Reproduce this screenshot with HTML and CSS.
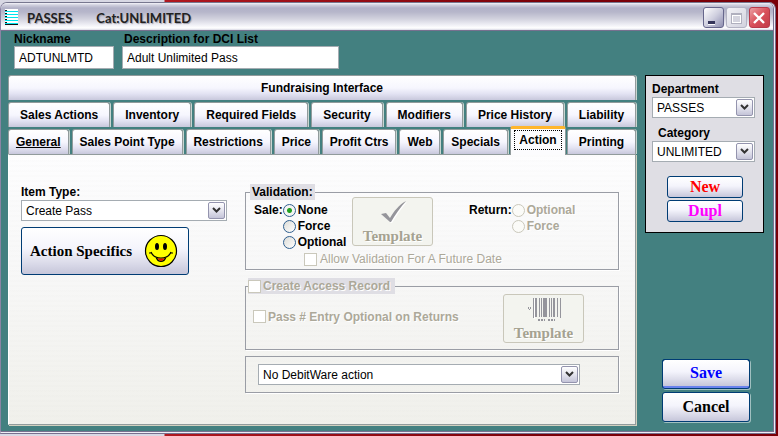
FILE: index.html
```html
<!DOCTYPE html>
<html lang="en">
<head>
    <meta charset="UTF-8">
    <meta name="viewport" content="width=device-width, initial-scale=1.0">
    <title>PASSES Cat:UNLIMITED</title>
    <link rel="stylesheet" href="styles.css">
</head>
<body>
    <div class="window">
        <header class="titlebar">
            <svg class="app-icon" width="14" height="17" viewBox="0 0 14 17" shape-rendering="crispEdges">
                <rect width="13" height="16" fill="#fff"/>
                <path d="M0 2.5h13M0 5.5h13M0 8.5h13M0 11.5h13M0 14.5h13" stroke="#00e5ee"/>
                <path d="M0 1.5h2M0 4.5h2M0 7.5h2M0 10.5h2M0 13.5h2M0 15.5h13" stroke="#111"/>
            </svg>
            <h1 class="title"><span>PASSES</span><span>Cat:UNLIMITED</span></h1>
            <div class="window-buttons">
                <button class="win-btn" type="button" aria-label="Minimize">
                    <svg width="18" height="18" viewBox="0 0 18 18"><path d="M4 13h7v3H4z" fill="#fff"/><path d="M4 12h7v3H4z" fill="#35355a"/></svg>
                </button>
                <button class="win-btn win-max" type="button" aria-label="Maximize" disabled>
                    <svg width="18" height="18" viewBox="0 0 18 18" shape-rendering="crispEdges"><path d="M4 4h11v11H4z" fill="#b0b0be"/><path d="M5 6h9v8H5z" fill="#fff"/><path d="M6 7h7v6H6z" fill="#d4d4de"/></svg>
                </button>
                <button class="win-btn win-close" type="button" aria-label="Close">
                    <svg width="18" height="18" viewBox="0 0 18 18"><path d="M4 4l10 10M14 4L4 14" stroke="#fff" stroke-width="2.4"/></svg>
                </button>
            </div>
        </header>

        <div class="client">
            <div class="fields">
                <div class="field field-nick">
                    <label for="nickname">Nickname</label>
                    <input type="text" id="nickname" value="ADTUNLMTD">
                </div>
                <div class="field field-desc">
                    <label for="description">Description for DCI List</label>
                    <input type="text" id="description" value="Adult Unlimited Pass">
                </div>
            </div>

            <div class="columns">
                <main class="notebook">
                    <div class="tabs" role="tablist">
                        <div class="tab-row">
                            <button class="tab" role="tab" type="button">Fundraising Interface</button>
                        </div>
                        <div class="tab-row">
                            <button class="tab" role="tab" type="button">Sales Actions</button>
                            <button class="tab" role="tab" type="button">Inventory</button>
                            <button class="tab" role="tab" type="button">Required Fields</button>
                            <button class="tab" role="tab" type="button">Security</button>
                            <button class="tab" role="tab" type="button">Modifiers</button>
                            <button class="tab" role="tab" type="button">Price History</button>
                            <button class="tab tab-last" role="tab" type="button">Liability</button>
                        </div>
                        <div class="tab-row">
                            <button class="tab" role="tab" type="button"><u>General</u></button>
                            <button class="tab" role="tab" type="button">Sales Point Type</button>
                            <button class="tab" role="tab" type="button">Restrictions</button>
                            <button class="tab" role="tab" type="button">Price</button>
                            <button class="tab" role="tab" type="button">Profit Ctrs</button>
                            <button class="tab" role="tab" type="button">Web</button>
                            <button class="tab" role="tab" type="button">Specials</button>
                            <button class="tab tab-active" role="tab" type="button" aria-selected="true"><span>Action</span></button>
                            <button class="tab tab-last" role="tab" type="button">Printing</button>
                        </div>
                    </div>

                    <section class="panel" role="tabpanel">
                        <div class="item-type">
                            <label for="itemType">Item Type:</label>
                            <div class="combo">
                                <select id="itemType"><option>Create Pass</option></select>
                                <svg class="combo-arrow" viewBox="0 0 15 15"><path d="M4 5l3.500 3.500L11 5" /></svg>
                            </div>
                            <button class="btn btn-specifics" type="button">
                                Action Specifics
                                <svg width="34" height="34" viewBox="0 0 34 34">
                                    <circle cx="17" cy="17" r="15.5" fill="#ff0" stroke="#000" stroke-width="1.2"/>
                                    <ellipse cx="13" cy="12.500" rx="2" ry="3.500"/>
                                    <ellipse cx="21" cy="12.500" rx="2" ry="3.500"/>
                                    <path d="M13 24q4 1 8 0q-4 6-8 0z" fill="#f00000"/>
                                    <path d="M5 19h3M26 19h3M7 18c3 8 17 8 20 0M12 23c2 6 8 6 10 0" fill="none" stroke="#000" stroke-width="1.2"/>
                                </svg>
                            </button>
                        </div>

                        <div class="groups">
                            <fieldset class="group group-validation">
                                <legend>Validation:</legend>
                                <div class="validation">
                                    <div class="choice">
                                        <span>Sale:</span>
                                        <div class="radios">
                                            <label><input type="radio" name="sale" checked>None</label>
                                            <label><input type="radio" name="sale">Force</label>
                                            <label><input type="radio" name="sale">Optional</label>
                                        </div>
                                    </div>
                                    <button class="btn btn-template" type="button" disabled>
                                        <svg width="28" height="24" viewBox="0 0 28 24"><path d="M4 15l3-1 4 4C15 11 20 5 27 1C21 8 16 15 12 22h-1z" fill="#fff" transform="translate(1 1)"/><path d="M2 14l5-1 4 5C15 11 20 5 27 1C21 8 16 15 12 22h-1z" fill="#95959b"/></svg>
                                        Template
                                    </button>
                                    <div class="choice choice-return">
                                        <span>Return:</span>
                                        <div class="radios">
                                            <label class="off"><input type="radio" name="return" disabled>Optional</label>
                                            <label class="off"><input type="radio" name="return" disabled>Force</label>
                                        </div>
                                    </div>
                                </div>
                                <label class="check future off"><input type="checkbox" disabled>Allow Validation For A Future Date</label>
                            </fieldset>

                            <fieldset class="group group-access">
                                <legend><label class="check off"><input type="checkbox" disabled>Create Access Record</label></legend>
                                <div class="access">
                                    <label class="check off"><input type="checkbox" disabled>Pass # Entry Optional on Returns</label>
                                    <button class="btn btn-template" type="button" disabled>
                                        <svg width="36" height="24" viewBox="0 0 36 24" shape-rendering="crispEdges">
                                            <path d="M8 2v20M36 2v20" stroke="#fff"/>
                                            <path d="M7.500 1v20M13.500 1v19M15.500 1v19M23.500 1v19M25.500 1v19M31.500 1v19M34.500 1v20" stroke="#95959c"/>
                                            <path d="M10 1v19M18 1v19M20 1v19M28 1v19" stroke="#95959c" stroke-width="2"/>
                                            <path d="M12 22.500h7M22 22.500h7" stroke="#95959c" stroke-width="2" stroke-dasharray="2 1"/>
                                            <path d="M2 10h1v2H2zM4 10h1v2H4zM3 12h1v1H3z" fill="#95959c"/>
                                        </svg>
                                        Template
                                    </button>
                                </div>
                            </fieldset>

                            <div class="group group-debit">
                                <div class="combo">
                                    <select aria-label="DebitWare action"><option>No DebitWare action</option></select>
                                    <svg class="combo-arrow" viewBox="0 0 15 15"><path d="M4 5l3.500 3.500L11 5" /></svg>
                                </div>
                            </div>
                        </div>
                    </section>
                </main>

                <aside class="side">
                    <div class="side-box">
                        <label for="department">Department</label>
                        <div class="combo">
                            <select id="department"><option>PASSES</option></select>
                            <svg class="combo-arrow" viewBox="0 0 15 15"><path d="M4 5l3.500 3.500L11 5" /></svg>
                        </div>
                        <label class="category" for="category">Category</label>
                        <div class="combo">
                            <select id="category"><option>UNLIMITED</option></select>
                            <svg class="combo-arrow" viewBox="0 0 15 15"><path d="M4 5l3.500 3.500L11 5" /></svg>
                        </div>
                        <div class="side-actions">
                            <button class="btn btn-new" type="button">New</button>
                            <button class="btn btn-dupl" type="button">Dupl</button>
                        </div>
                    </div>
                    <div class="commit">
                        <button class="btn btn-save" type="submit">Save</button>
                        <button class="btn" type="button">Cancel</button>
                    </div>
                </aside>
            </div>
        </div>
    </div>
</body>
</html>
```
FILE: styles.css
```css
* {
    box-sizing: border-box;
}
body {
    margin: 0;
    min-height: 100vh;
    padding: 2px 2px 2px 0;
    display: flex;
    font-family: "Liberation Sans", Arial, sans-serif;
    font-size: 12px;
    font-weight: bold;
    color: #000;
    background: linear-gradient(to right, #d8d8e4 164px, #b01820 165px, #7a0008 70%);
}
button, input, select {
    font: inherit;
    color: inherit;
    margin: 0;
}
.window {
    flex: 1;
    display: flex;
    flex-direction: column;
    background: #eeeef6;
    border: 3px double #77708f;
    border-left: 1px solid #8a84a4;
    border-top: 1px solid #77778f;
    border-radius: 7px 7px 0 0;
}

/* title bar */
.titlebar {
    display: flex;
    align-items: center;
    height: 28px;
    padding: 0 3px 0 4px;
    border-bottom: 1px solid #77708f;
    border-radius: 6px 6px 0 0;
    background: linear-gradient(#f4f4fa 0, #d0d0de 2px, #b2b2c8 5px, #b6b6ca 9px, #d2d2de 16px, #f0f0f6 22px, #fff 25px, #d8d8e4 27px);
}
.app-icon {
    margin-top: 2px;
}
.title {
    flex: 1;
    display: flex;
    gap: 24px;
    margin: 2px 0 0 8px;
    font-family: Lato, sans-serif;
    font-size: 13px;
    font-weight: bold;
    color: #222;
    text-shadow: 1px 1px 1px #a0a0ac;
}
.window-buttons {
    display: flex;
    gap: 2px;
    margin-top: 2px;
}
.win-btn {
    width: 21px;
    height: 21px;
    padding: 0;
    border: 1px solid #67678c;
    border-radius: 3px;
    background: linear-gradient(135deg, #fff, #cfcfdf 50%, #8e8eb0);
}
.win-btn svg {
    display: block;
}
.win-max {
    border-color: #b4b4c4;
    background: linear-gradient(135deg, #f2f2f6, #d2d2de);
}
.win-close {
    border-color: #b83a4a;
    background: linear-gradient(135deg, #eba0a4, #d9505a 50%, #c23a48);
}

/* client area */
.client {
    flex: 1;
    display: flex;
    flex-direction: column;
    padding: 1px 9px 6px 7px;
    background: #438080;
}
.fields {
    display: flex;
    gap: 8px;
    padding-left: 6px;
}
.field {
    display: flex;
    flex-direction: column;
}
.field label {
    line-height: 14px;
}
.field input {
    height: 23px;
    padding: 0 4px;
    border: 1px solid #a5acb2;
    background: #fff;
    font-weight: normal;
}
.field-nick {
    width: 100px;
}
.field-desc {
    width: 217px;
}
.field-desc label {
    padding-left: 2px;
}
.columns {
    flex: 1;
    display: grid;
    grid-template-columns: 1fr 119px;
    gap: 9px;
    margin-top: 6px;
}
.notebook {
    display: flex;
    flex-direction: column;
}

/* tabs */
.tabs {
    display: flex;
    flex-direction: column;
    gap: 2px;
}
.tab-row {
    display: flex;
    gap: 3px;
}
.tab {
    flex: 1 1 auto;
    height: 25px;
    padding: 0 6px;
    border: 1px solid #919b9c;
    border-bottom: 0;
    border-radius: 3px 3px 0 0;
    background: linear-gradient(#fff, #f6f6fe 50%, #e2e2f2 75%, #c8c8dc);
    box-shadow: 1px 0 0 #c8d4d0;
    white-space: nowrap;
}
.tab-last {
    flex: 0 0 69px;
}
.tab-active {
    flex: 0 0 56px;
    height: 29px;
    margin: -3px -2px -1px -1px;
    padding: 0;
    border-top: 3px solid #ffb62e;
    background: #fcfcfe;
    box-shadow: none;
    z-index: 1;
}
.tab-active span {
    display: block;
    margin: 0 3px 4px;
    line-height: 18px;
    border: 1px dotted #000;
}

/* tab page */
.panel {
    flex: 1;
    display: grid;
    grid-template-columns: 206px 1fr;
    gap: 18px;
    padding: 29px 16px 0 12px;
    border: 1px solid #919b9c;
    border-left-color: #fff;
    background:
        repeating-linear-gradient(rgba(120, 120, 100, 0.01) 0 2px, transparent 2px 5px),
        linear-gradient(#fdfdfe, #f8f8f8 40%, #f0f0eb);
    box-shadow: 1px 1px 0 #d0d0bf;
}
.item-type {
    display: flex;
    flex-direction: column;
    align-items: stretch;
}
.item-type label {
    line-height: 16px;
}

/* drop-downs */
.combo {
    display: grid;
    align-items: center;
}
.combo select, .combo-arrow {
    grid-area: 1 / 1;
}
.combo select {
    appearance: none;
    width: 100%;
    height: 21px;
    padding: 0 20px 0 4px;
    border: 1px solid #a5acb2;
    border-radius: 0;
    background: #fff;
    font-weight: normal;
}
.combo-arrow {
    justify-self: end;
    width: 17px;
    height: 17px;
    margin-right: 2px;
    border: 1px solid #9494ae;
    border-radius: 2px;
    background: linear-gradient(#fff, #e4e4ee 50%, #c4c4d8);
    fill: none;
    stroke: #333;
    stroke-width: 2;
    pointer-events: none;
}

/* push buttons */
.btn {
    padding: 0;
    border: 1px solid #003c74;
    border-radius: 3px;
    background: linear-gradient(#fff, #f4f4fc 45%, #dcdcea 75%, #c6c6da);
    font-family: "Liberation Serif", "Times New Roman", serif;
    font-size: 16px;
    font-weight: bold;
}
.btn-specifics {
    display: flex;
    align-items: center;
    justify-content: space-between;
    width: 168px;
    height: 48px;
    margin-top: 6px;
    padding: 0 10px 0 8px;
    font-size: 15px;
    white-space: nowrap;
}
.btn-template {
    display: flex;
    flex-direction: column;
    align-items: center;
    justify-content: space-between;
    width: 81px;
    height: 49px;
    padding: 2px 0 0;
    border-color: #c9c7ba;
    background: #f3f4ef;
    font-size: 15px;
    line-height: 17px;
    color: #a5a291;
    text-shadow: 1px 1px 0 #fff;
}

/* group boxes */
.groups {
    min-width: 0;
}
.group {
    min-width: 0;
    margin: 0;
    padding: 0;
    border: 1px solid #9a9da5;
    box-shadow: 1px 1px 0 #fff;
}
.group legend {
    margin-left: 4px;
    padding: 0 2px;
    line-height: 16px;
    background: #dfdee4;
}
.group-validation {
    height: 86px;
}
.validation {
    display: flex;
    margin-top: -3px;
    padding-left: 8px;
}
.choice {
    display: flex;
    width: 98px;
    padding-top: 5px;
    line-height: 16px;
}
.choice-return {
    width: auto;
    margin-left: 36px;
}
.radios {
    display: flex;
    flex-direction: column;
}
.radios label, .check {
    display: flex;
    align-items: center;
    gap: 2px;
    line-height: 16px;
    white-space: nowrap;
}
.off {
    color: #aca899;
    text-shadow: 1px 1px 0 #fff;
}
input[type="radio"] {
    appearance: none;
    width: 13px;
    height: 13px;
    border: 1px solid #2f5f8f;
    border-radius: 50%;
    background: linear-gradient(135deg, #dcdcd7, #fff);
}
input[type="radio"]:checked {
    background: radial-gradient(circle, #21a121 0 2px, #f4f4f2 3px);
}
input[type="radio"]:disabled {
    border-color: #cac8bb;
    background: #fbfbf8;
}
input[type="checkbox"] {
    appearance: none;
    width: 13px;
    height: 13px;
    border: 1px solid #cac8bb;
    background: #fff;
}
.future {
    margin: 1px 0 0 58px;
    gap: 3px;
    font-weight: normal;
}
.group-access {
    height: 72px;
    margin-top: 8px;
}
.group-access legend {
    margin-left: 2px;
    padding: 0 5px 0 0;
}
.access {
    display: flex;
    align-items: center;
    justify-content: space-between;
    padding: 0 34px 0 7px;
}
.access .check {
    padding-bottom: 4px;
}
.group-debit {
    margin-top: 6px;
    padding: 7px 38px 7px 12px;
}

/* right side */
.side {
    display: flex;
    flex-direction: column;
    justify-content: space-between;
}
.side-box {
    padding: 6px 8px 10px 6px;
    border: 1px solid #000;
    background: #dfdee4;
}
.side-box label {
    display: block;
    line-height: 15px;
}
.side-box .category {
    margin: 8px 0 0 6px;
}
.side-actions {
    display: flex;
    flex-direction: column;
    gap: 2px;
    margin: 14px 12px 0 15px;
}
.side-actions .btn {
    height: 22px;
    line-height: 18px;
}
.btn-new {
    color: #f00;
}
.btn-dupl {
    color: #f0f;
}
.commit {
    display: flex;
    flex-direction: column;
    gap: 3px;
    padding: 0 14px 3px 17px;
}
.commit .btn {
    height: 30px;
    box-shadow: 1px 1px 0 #a0c0c0;
}
.commit .btn-save {
    color: #00f;
    border-bottom: 3px solid #6982ee;
    outline: 1px solid #003c74;
    outline-offset: -1px;
}
```
